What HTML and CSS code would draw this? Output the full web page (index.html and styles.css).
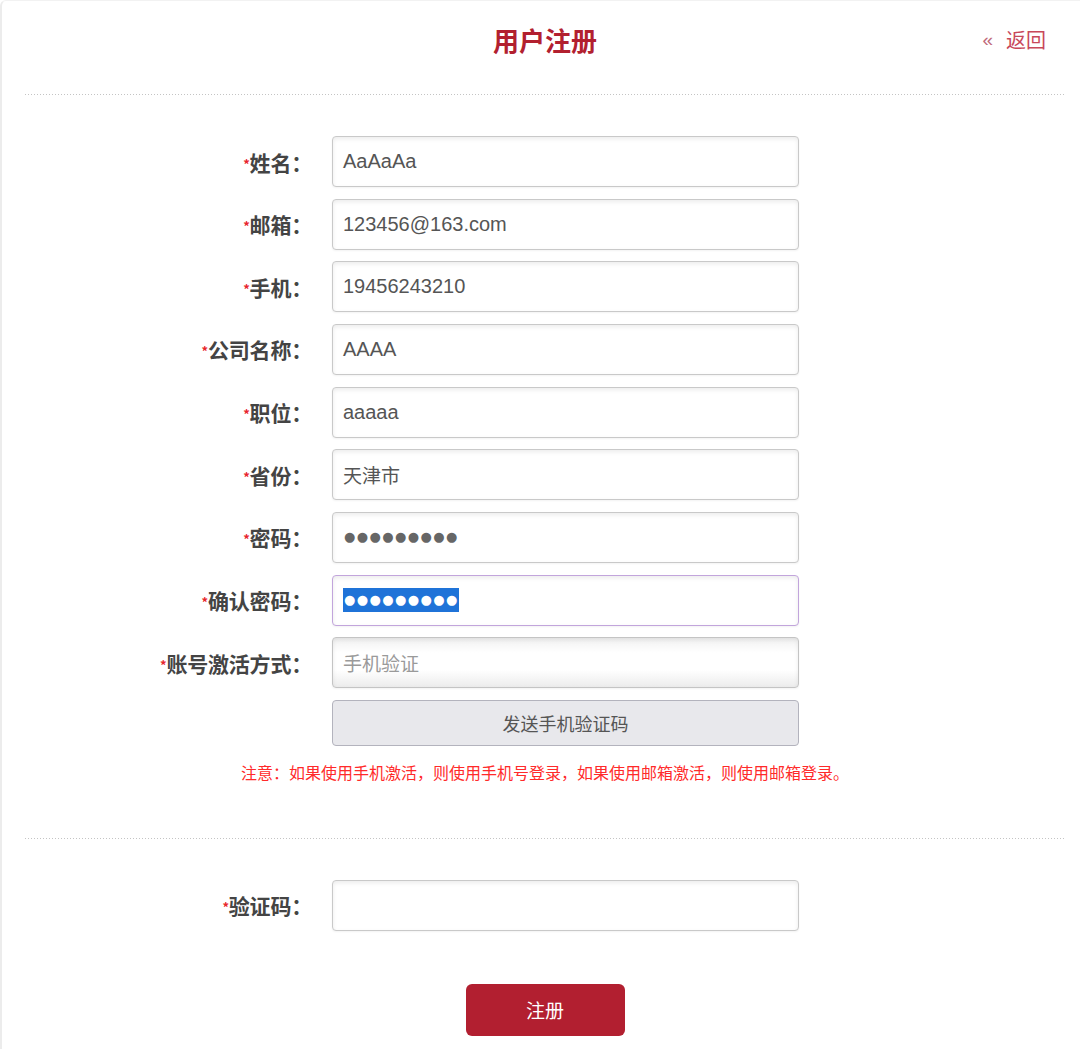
FILE: index.html
```html
<!DOCTYPE html>
<html lang="zh-CN">
<head>
<meta charset="utf-8">
<title>用户注册</title>
<link rel="stylesheet" href="styles.css">
</head>
<body>
<div class="page">
  <header class="header">
    <span></span>
    <h1 class="title">用户注册</h1>
    <a class="back" href="#"><span class="back-arrow">«</span>返回</a>
  </header>
  <div class="divider divider-top"></div>

  <form class="form">
    <div class="rows">
      <div class="row"><label class="label"><i class="star">*</i>姓名：</label><div class="field">AaAaAa</div></div>
      <div class="row"><label class="label"><i class="star">*</i>邮箱：</label><div class="field">123456@163.com</div></div>
      <div class="row"><label class="label"><i class="star">*</i>手机：</label><div class="field">19456243210</div></div>
      <div class="row"><label class="label"><i class="star">*</i>公司名称：</label><div class="field">AAAA</div></div>
      <div class="row"><label class="label"><i class="star">*</i>职位：</label><div class="field">aaaaa</div></div>
      <div class="row"><label class="label"><i class="star">*</i>省份：</label><div class="field field-cjk">天津市</div></div>
      <div class="row"><label class="label"><i class="star">*</i>密码：</label><div class="field"><span class="dots">●●●●●●●●●</span></div></div>
      <div class="row"><label class="label"><i class="star">*</i>确认密码：</label><div class="field field-focus"><span class="dots dots-selected">●●●●●●●●●</span></div></div>
      <div class="row"><label class="label"><i class="star">*</i>账号激活方式：</label><div class="field field-select">手机验证</div></div>
      <div class="row row-btn"><button type="button" class="send-btn">发送手机验证码</button></div>
    </div>
    <p class="notice">注意：如果使用手机激活，则使用手机号登录，如果使用邮箱激活，则使用邮箱登录。</p>

    <div class="divider divider-mid"></div>

    <div class="row row-code"><label class="label"><i class="star">*</i>验证码：</label><div class="field"></div></div>

    <div class="submit-wrap"><button type="button" class="submit">注册</button></div>
  </form>
</div>
</body>
</html>
```

FILE: styles.css
```css
* { box-sizing: border-box; }

html, body {
  margin: 0;
  padding: 0;
  background: #fff;
}

body {
  font-family: "Noto Sans CJK SC", "Liberation Sans", sans-serif;
  color: #444;
}

.page {
  min-height: 1049px;
  border-left: 2px solid #ececec;
  border-top: 1px solid #f2f2f2;
  border-top-left-radius: 6px;
  padding: 0 15px 0 23px;
}

.header {
  display: grid;
  grid-template-columns: 1fr auto 1fr;
  align-items: center;
  height: 93px;
  padding-bottom: 16px;
}

.title {
  margin: 0;
  font-size: 26px;
  font-weight: 700;
  color: #b2202f;
  line-height: 1;
}

.back {
  justify-self: end;
  margin-right: 19px;
  color: #c8485a;
  text-decoration: none;
  font-size: 20px;
  line-height: 1;
  display: flex;
  align-items: center;
}

.back-arrow {
  font-family: "Liberation Sans", sans-serif;
  font-size: 19px;
  color: #c06a7a;
  margin-right: 13px;
}

.divider {
  height: 1px;
  background-image: repeating-linear-gradient(to right, #c4c4c4 0 1px, transparent 1px 3px);
}

.form {
  padding-top: 41px;
}

.rows {
  display: flex;
  flex-direction: column;
  gap: 11.67px;
}

.row {
  display: flex;
  align-items: center;
  height: 51px;
}

.label {
  width: 287px;
  margin-right: 20px;
  text-align: right;
  font-size: 21px;
  font-weight: 700;
  color: #444;
  white-space: nowrap;
  letter-spacing: -0.2px;
}

.star {
  font-style: normal;
  color: #e8262c;
  font-size: 13px;
  font-weight: 700;
  position: relative;
  top: -2px;
}

.field {
  width: 467px;
  height: 51px;
  border: 1px solid #c9c9c9;
  border-radius: 4px;
  background: #fff;
  box-shadow: inset 0 2px 4px rgba(0, 0, 0, 0.08), 0 1px 2px rgba(0, 0, 0, 0.05);
  padding-left: 10px;
  display: flex;
  align-items: center;
  font-family: "Liberation Sans", "Noto Sans CJK SC", sans-serif;
  font-size: 20px;
  color: #555;
}

.field-cjk {
  font-family: "Noto Sans CJK SC", sans-serif;
  font-size: 19px;
}

.field-focus {
  border-color: #c2a5dc;
}

.field-select {
  font-family: "Noto Sans CJK SC", sans-serif;
  font-size: 19px;
  color: #9a9a9a;
  background: linear-gradient(#f1f1f1, #fff 30%, #fff 65%, #ececec);
  border-color: #c4c4c4;
}

.dots {
  font-family: "DejaVu Sans", sans-serif;
  font-size: 13px;
  letter-spacing: 1.4px;
  color: #666;
  line-height: 24px;
  padding: 0 0 0 1px;
}

.dots-selected {
  background: #1f73d8;
  color: #fff;
}

.row-btn {
  padding-left: 307px;
  height: 46px;
}

.send-btn {
  width: 467px;
  height: 46px;
  border: 1px solid #b3b3bd;
  border-radius: 4px;
  background: #e8e8ec;
  color: #555;
  font-family: "Noto Sans CJK SC", sans-serif;
  font-size: 18px;
  cursor: pointer;
}

.notice {
  margin: 15px 0 0;
  text-align: center;
  color: #ff2a2a;
  font-size: 16px;
  line-height: 22px;
}

.divider-mid {
  margin-top: 55px;
}

.row-code {
  margin-top: 41px;
}

.submit-wrap {
  display: flex;
  justify-content: center;
  margin-top: 53px;
}

.submit {
  width: 159px;
  height: 52px;
  border: none;
  border-radius: 6px;
  background: #b21f30;
  color: #fff;
  font-family: "Noto Sans CJK SC", sans-serif;
  font-size: 19px;
  cursor: pointer;
}
```
